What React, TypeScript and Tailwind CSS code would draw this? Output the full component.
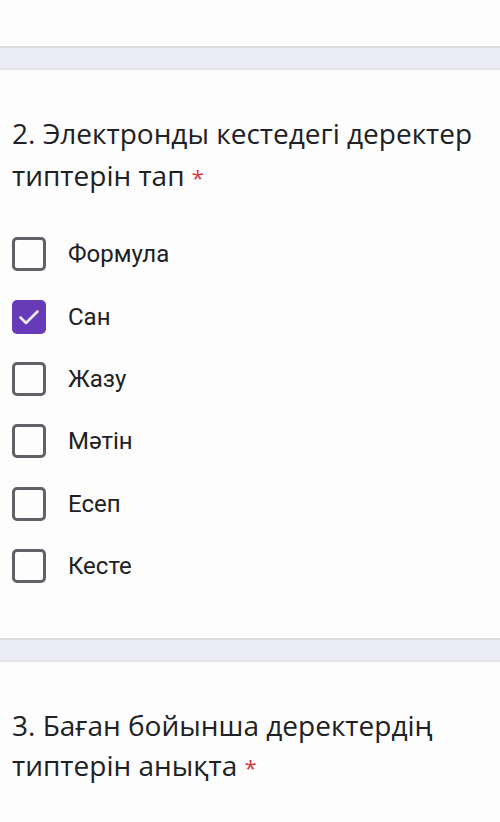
import React from 'react';

const options = [
  { label: 'Формула', checked: false },
  { label: 'Сан', checked: true },
  { label: 'Жазу', checked: false },
  { label: 'Мәтін', checked: false },
  { label: 'Есеп', checked: false },
  { label: 'Кесте', checked: false },
];

function Band() {
  return (
    <div className="h-[24px] bg-[#ecebf8] border-t-2 border-b-2 border-t-[#dcdce0] border-b-[#e2e1ec]" />
  );
}

function Checkbox({ checked }: { checked: boolean }) {
  if (checked) {
    return (
      <div className="w-[34px] h-[34px] rounded-[5px] bg-[#673ab7] flex items-center justify-center shrink-0">
        <svg width="24" height="24" viewBox="0 0 24 24" fill="none">
          <path d="M3.5 12.5l5.5 5.5L20.5 6.5" stroke="#f1ecfa" strokeWidth="2.6" strokeLinecap="round" strokeLinejoin="round" />
        </svg>
      </div>
    );
  }
  return <div className="w-[34px] h-[34px] rounded-[5px] border-[3px] border-[#5f6368] shrink-0" />;
}

function Star() {
  return <span className="text-[#cf3b3b] text-[22px]">*</span>;
}

export default function App() {
  return (
    <div className="w-[500px] h-[822px] bg-[#fdfdfd] overflow-hidden" style={{ fontFamily: '"Open Sans", Roboto, sans-serif' }}>
      <div className="h-[46px]" />
      <Band />

      {/* Question 2 */}
      <div className="px-[12px] pt-[42px]">
        <h2 className="text-[28px] leading-[42px] text-[#202124] font-normal">
          2. Электронды кестедегі деректер типтерін тап <Star />
        </h2>
        <div className="mt-[25px] flex flex-col">
          {options.map((o) => (
            <div key={o.label} className="h-[62.4px] flex items-center gap-[22px]">
              <Checkbox checked={o.checked} />
              <span className="text-[24px] text-[#202124]" style={{ fontFamily: 'Roboto, sans-serif' }}>{o.label}</span>
            </div>
          ))}
        </div>
      </div>

      <div className="h-[41px]" />
      <Band />

      {/* Question 3 */}
      <div className="px-[12px] pt-[43px]">
        <h2 className="text-[28px] leading-[40px] text-[#202124] font-normal">
          3. Баған бойынша деректердің типтерін анықта <Star />
        </h2>
      </div>
    </div>
  );
}
